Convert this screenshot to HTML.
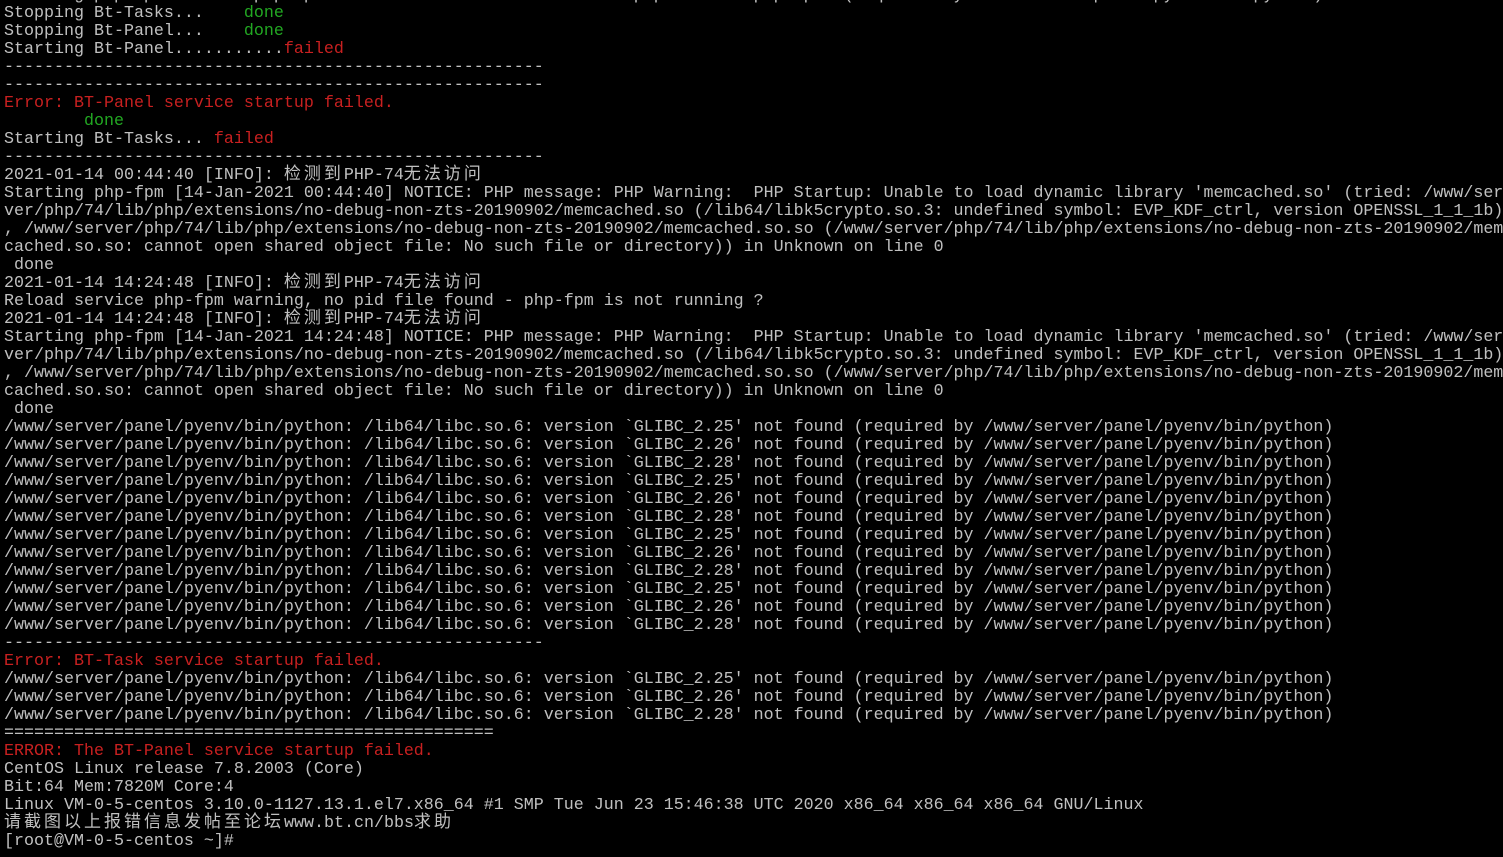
<!DOCTYPE html>
<html><head><meta charset="utf-8"><style>
html,body{margin:0;padding:0;background:#000;width:1503px;height:857px;overflow:hidden}
pre{position:absolute;left:4px;top:-13px;margin:0;font-family:"Liberation Mono","Noto Sans CJK SC",monospace;font-size:16.67px;line-height:18px;color:#c0c0c0;white-space:pre}
.g{color:#22a822}.r{color:#c82020}
.c{font-family:"Noto Sans CJK SC","WenQuanYi Zen Hei",sans-serif;font-size:17px;letter-spacing:3px;line-height:0}
</style></head><body><pre>
Starting php-fpm  Error: php-fpm  failed to start  /www/server/php/74/sbin/php-fpm  (required by /www/server/panel/pyenv/bin/python)
Stopping Bt-Tasks...    <span class="g">done</span>
Stopping Bt-Panel...    <span class="g">done</span>
Starting Bt-Panel...........<span class="r">failed</span>
------------------------------------------------------
------------------------------------------------------
<span class="r">Error: BT-Panel service startup failed.</span>
        <span class="g">done</span>
Starting Bt-Tasks... <span class="r">failed</span>
------------------------------------------------------
2021-01-14 00:44:40 [INFO]: <span class="c">检测到</span>PHP-74<span class="c">无法访问</span>
Starting php-fpm [14-Jan-2021 00:44:40] NOTICE: PHP message: PHP Warning:  PHP Startup: Unable to load dynamic library 'memcached.so' (tried: /www/ser
ver/php/74/lib/php/extensions/no-debug-non-zts-20190902/memcached.so (/lib64/libk5crypto.so.3: undefined symbol: EVP_KDF_ctrl, version OPENSSL_1_1_1b)
, /www/server/php/74/lib/php/extensions/no-debug-non-zts-20190902/memcached.so.so (/www/server/php/74/lib/php/extensions/no-debug-non-zts-20190902/mem
cached.so.so: cannot open shared object file: No such file or directory)) in Unknown on line 0
 done
2021-01-14 14:24:48 [INFO]: <span class="c">检测到</span>PHP-74<span class="c">无法访问</span>
Reload service php-fpm warning, no pid file found - php-fpm is not running ?
2021-01-14 14:24:48 [INFO]: <span class="c">检测到</span>PHP-74<span class="c">无法访问</span>
Starting php-fpm [14-Jan-2021 14:24:48] NOTICE: PHP message: PHP Warning:  PHP Startup: Unable to load dynamic library 'memcached.so' (tried: /www/ser
ver/php/74/lib/php/extensions/no-debug-non-zts-20190902/memcached.so (/lib64/libk5crypto.so.3: undefined symbol: EVP_KDF_ctrl, version OPENSSL_1_1_1b)
, /www/server/php/74/lib/php/extensions/no-debug-non-zts-20190902/memcached.so.so (/www/server/php/74/lib/php/extensions/no-debug-non-zts-20190902/mem
cached.so.so: cannot open shared object file: No such file or directory)) in Unknown on line 0
 done
/www/server/panel/pyenv/bin/python: /lib64/libc.so.6: version `GLIBC_2.25' not found (required by /www/server/panel/pyenv/bin/python)
/www/server/panel/pyenv/bin/python: /lib64/libc.so.6: version `GLIBC_2.26' not found (required by /www/server/panel/pyenv/bin/python)
/www/server/panel/pyenv/bin/python: /lib64/libc.so.6: version `GLIBC_2.28' not found (required by /www/server/panel/pyenv/bin/python)
/www/server/panel/pyenv/bin/python: /lib64/libc.so.6: version `GLIBC_2.25' not found (required by /www/server/panel/pyenv/bin/python)
/www/server/panel/pyenv/bin/python: /lib64/libc.so.6: version `GLIBC_2.26' not found (required by /www/server/panel/pyenv/bin/python)
/www/server/panel/pyenv/bin/python: /lib64/libc.so.6: version `GLIBC_2.28' not found (required by /www/server/panel/pyenv/bin/python)
/www/server/panel/pyenv/bin/python: /lib64/libc.so.6: version `GLIBC_2.25' not found (required by /www/server/panel/pyenv/bin/python)
/www/server/panel/pyenv/bin/python: /lib64/libc.so.6: version `GLIBC_2.26' not found (required by /www/server/panel/pyenv/bin/python)
/www/server/panel/pyenv/bin/python: /lib64/libc.so.6: version `GLIBC_2.28' not found (required by /www/server/panel/pyenv/bin/python)
/www/server/panel/pyenv/bin/python: /lib64/libc.so.6: version `GLIBC_2.25' not found (required by /www/server/panel/pyenv/bin/python)
/www/server/panel/pyenv/bin/python: /lib64/libc.so.6: version `GLIBC_2.26' not found (required by /www/server/panel/pyenv/bin/python)
/www/server/panel/pyenv/bin/python: /lib64/libc.so.6: version `GLIBC_2.28' not found (required by /www/server/panel/pyenv/bin/python)
------------------------------------------------------
<span class="r">Error: BT-Task service startup failed.</span>
/www/server/panel/pyenv/bin/python: /lib64/libc.so.6: version `GLIBC_2.25' not found (required by /www/server/panel/pyenv/bin/python)
/www/server/panel/pyenv/bin/python: /lib64/libc.so.6: version `GLIBC_2.26' not found (required by /www/server/panel/pyenv/bin/python)
/www/server/panel/pyenv/bin/python: /lib64/libc.so.6: version `GLIBC_2.28' not found (required by /www/server/panel/pyenv/bin/python)
=================================================
<span class="r">ERROR: The BT-Panel service startup failed.</span>
CentOS Linux release 7.8.2003 (Core)
Bit:64 Mem:7820M Core:4
Linux VM-0-5-centos 3.10.0-1127.13.1.el7.x86_64 #1 SMP Tue Jun 23 15:46:38 UTC 2020 x86_64 x86_64 x86_64 GNU/Linux
<span class="c">请截图以上报错信息发帖至论坛</span>www.bt.cn/bbs<span class="c">求助</span>
[root@VM-0-5-centos ~]# 
</pre></body></html>
